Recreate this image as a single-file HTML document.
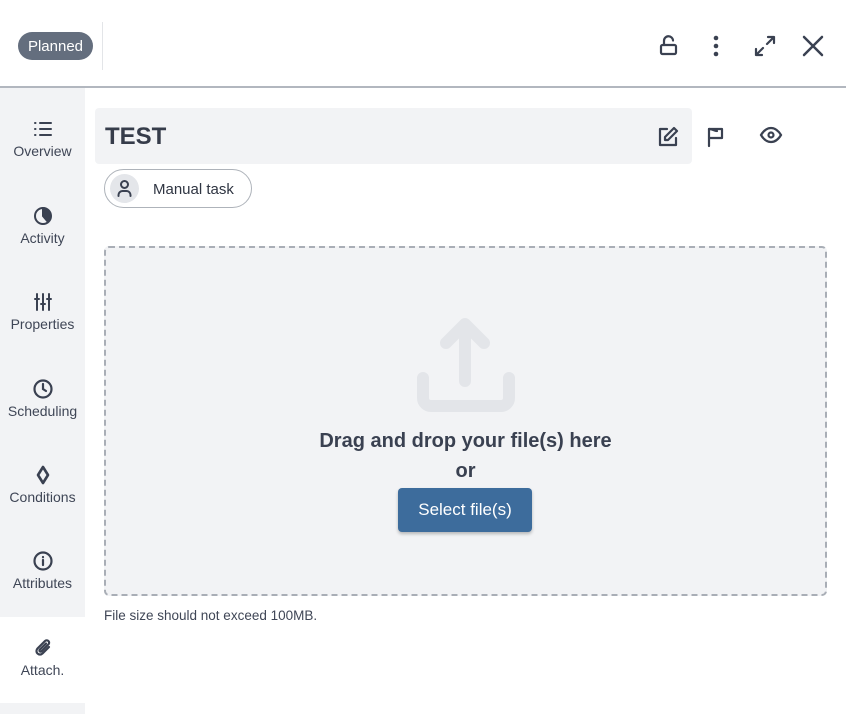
<!DOCTYPE html>
<html><head><style>
*{box-sizing:border-box;margin:0;padding:0}
body{width:846px;height:714px;background:#fff;font-family:"Liberation Sans",sans-serif;color:#363c4a;position:relative;overflow:hidden}
.abs{position:absolute}
.badge{left:18px;top:32px;width:75px;height:28px;border-radius:14px;background:#646e7e;color:#fff;font-size:15px;line-height:29px;text-align:center}
.vsep{left:102px;top:22px;width:1px;height:48px;background:#e3e5e8}
.hline{left:0;top:86px;width:846px;height:2px;background:#b2b7bf}
.side{left:0;top:88px;width:85px;height:626px;background:#f2f3f5}
.item{position:absolute;left:0;width:85px;text-align:center;font-size:14px;color:#3f4656}
.item svg{display:block;margin:0 auto 3px}
.title{left:95px;top:108px;width:597px;height:56px;background:#f2f3f5;border-radius:4px}
.title span{position:absolute;left:10px;top:15px;font-size:24px;font-weight:bold;color:#363c4a}
.chip{left:104px;top:169px;width:148px;height:39px;border:1px solid #aeb3ba;border-radius:20px}
.chip .av{position:absolute;left:5px;top:4px;width:29px;height:29px;border-radius:50%;background:#e4e6ea}
.chip span{position:absolute;left:48px;top:11px;font-size:15px;color:#2f3542}
.drop{left:104px;top:246px;width:723px;height:350px;border:2px dashed #a9aeb6;border-radius:5px;background:#f2f3f5}
.dt{left:104px;width:723px;text-align:center;font-weight:bold;font-size:20px;color:#3a4151}
.btn{left:398px;top:488px;width:134px;height:44px;background:#3d6c9c;border-radius:4px;color:#fff;font-size:17px;line-height:44px;text-align:center;box-shadow:0 2px 3px rgba(0,0,0,.25)}
.note{left:104px;top:608px;font-size:13.5px;color:#3f4656}
</style></head><body>
<div class="abs badge">Planned</div>
<div class="abs vsep"></div>
<svg class="abs" style="left:655px;top:30px" width="28" height="30" viewBox="0 0 28 30" fill="none" stroke="#3a4151" stroke-width="2.2" stroke-linecap="round" stroke-linejoin="round"><rect x="6" y="15" width="15" height="9" rx="1.5"/><path d="M9 15V11a4.5 4.5 0 0 1 9-0.5"/></svg>
<svg class="abs" style="left:706px;top:34px" width="20" height="24" viewBox="0 0 20 24" fill="#3a4151"><circle cx="10" cy="4" r="2.3"/><circle cx="10" cy="12" r="2.3"/><circle cx="10" cy="20" r="2.3"/></svg>
<svg class="abs" style="left:752px;top:33px" width="26" height="26" viewBox="0 0 26 26" fill="none" stroke="#3a4151" stroke-width="2.2" stroke-linecap="round" stroke-linejoin="round"><path d="M15 11l7-7M16 4h6v6M11 15l-7 7M4 16v6h6"/></svg>
<svg class="abs" style="left:800px;top:33px" width="26" height="26" viewBox="0 0 26 26" fill="none" stroke="#3a4151" stroke-width="2.5" stroke-linecap="round"><path d="M4 4l18 18M22 4L4 22"/></svg>
<div class="abs hline"></div>
<div class="abs side"></div>
<div class="abs" style="left:0;top:617px;width:85px;height:86px;background:#fff"></div>
<div class="item" style="top:118px"><svg width="22" height="22" viewBox="0 0 22 22" stroke="#3a4151" stroke-width="2" stroke-linecap="round"><path d="M3 5h.5M3 11h.5M3 17h.5M8 5h11M8 11h11M8 17h11"/></svg>Overview</div>
<div class="item" style="top:205px"><svg width="22" height="22" viewBox="0 0 22 22" fill="none" stroke="#3a4151" stroke-width="2"><circle cx="11" cy="11" r="8"/><path d="M11 3a8 8 0 0 1 5 14L11 11z" fill="#3a4151"/></svg>Activity</div>
<div class="item" style="top:291px"><svg width="22" height="22" viewBox="0 0 22 22" stroke="#3a4151" stroke-width="2" stroke-linecap="round"><path d="M5 3v16M11 3v16M17 3v16M3 8h4M9 13h4M15 8h4"/></svg>Properties</div>
<div class="item" style="top:378px"><svg width="22" height="22" viewBox="0 0 22 22" fill="none" stroke="#3a4151" stroke-width="2.2" stroke-linecap="round"><circle cx="11" cy="11" r="8.5"/><path d="M11 6v5l3 2"/></svg>Scheduling</div>
<div class="item" style="top:464px"><svg width="22" height="22" viewBox="0 0 22 22" fill="none" stroke="#3a4151" stroke-width="2.6" stroke-linejoin="round"><path d="M11 3l5 8-5 8-5-8z"/></svg>Conditions</div>
<div class="item" style="top:550px"><svg width="22" height="22" viewBox="0 0 22 22" fill="none" stroke="#3a4151" stroke-width="2.2" stroke-linecap="round"><circle cx="11" cy="11" r="8.5"/><path d="M11 10v5M11 7v.3"/></svg>Attributes</div>
<div class="item" style="top:637px"><svg width="22" height="22" viewBox="0 0 22 22" fill="none" stroke="#3a4151" stroke-width="2.2" stroke-linecap="round"><path d="M17 10l-6.5 6.5a3.5 3.5 0 0 1-5-5L13 4a2.4 2.4 0 0 1 3.4 3.4L9.5 14.3a1.2 1.2 0 0 1-1.7-1.7L14 6.5"/></svg>Attach.</div>
<div class="abs title"><span>TEST</span></div>
<svg class="abs" style="left:656px;top:125px" width="24" height="24" viewBox="0 0 24 24" fill="none" stroke="#3a4151" stroke-width="2.2" stroke-linecap="round" stroke-linejoin="round"><path d="M11 4H4v16h16v-7"/><path d="M18 3l3 3-9 9H9v-3z"/></svg>
<svg class="abs" style="left:705px;top:125px" width="22" height="24" viewBox="0 0 22 24" fill="none" stroke="#3a4151" stroke-width="2.2" stroke-linecap="round" stroke-linejoin="round"><path d="M4 21V4h13v9H4"/><path d="M4 4c4 0 5 2 8 2"/></svg>
<svg class="abs" style="left:758px;top:124px" width="26" height="22" viewBox="0 0 26 22" fill="none" stroke="#3a4151" stroke-width="2.2"><path d="M3 11c3-5 6.5-7 10-7s7 2 10 7c-3 5-6.5 7-10 7s-7-2-10-7z"/><circle cx="13" cy="11" r="2.5"/></svg>
<div class="abs chip"><div class="av"><svg width="29" height="29" viewBox="0 0 29 29" fill="none" stroke="#3a4151" stroke-width="2" stroke-linecap="round"><circle cx="14.5" cy="10.5" r="3.5"/><path d="M8.5 22v-1a4 4 0 0 1 4-4h4a4 4 0 0 1 4 4v1"/></svg></div><span>Manual task</span></div>
<div class="abs drop"></div>
<svg class="abs" style="left:410px;top:310px" width="112" height="112" viewBox="410 310 112 112" fill="none" stroke="#e3e5e9" stroke-width="12" stroke-linecap="round" stroke-linejoin="round"><path d="M465 324v57M446 343l19-19 19 19"/><path d="M423 378v20a8 8 0 0 0 8 8h70a8 8 0 0 0 8-8v-20"/></svg>
<div class="abs dt" style="top:430px">Drag and drop your file(s) here</div>
<div class="abs dt" style="top:460px">or</div>
<div class="abs btn">Select file(s)</div>
<div class="abs note">File size should not exceed 100MB.</div>
</body></html>
